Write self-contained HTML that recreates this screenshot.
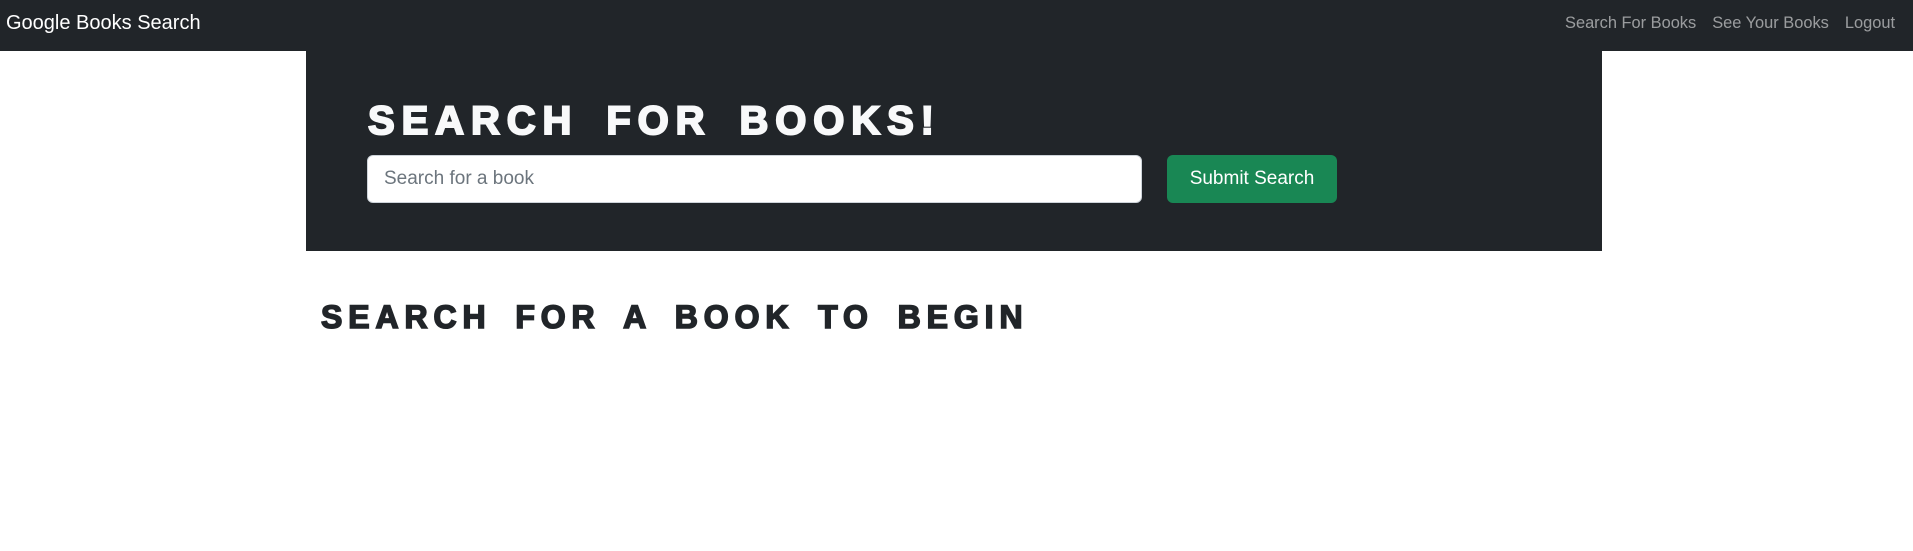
<!DOCTYPE html>
<html><head><meta charset="utf-8"><style>
*{box-sizing:border-box;margin:0;padding:0}
body{width:1913px;height:551px;background:#fff;font-family:"Liberation Sans",sans-serif;position:relative;overflow:hidden}
.nav{position:absolute;left:0;top:0;width:1913px;height:51px;background:#212529}
.brand{position:absolute;left:6px;top:12px;color:#fff;font-size:20px}
.links{position:absolute;right:18px;top:14px;color:rgba(255,255,255,.55);font-size:16.4px}
.links span{margin-left:16px}
.panel{position:absolute;left:306px;top:51px;width:1296px;height:200px;background:#212529}
h1,h2{position:absolute;font-weight:900;white-space:nowrap}
h1{left:368px;top:99px;color:#f8f9fa;font-size:40px;letter-spacing:6.9px;word-spacing:10px;-webkit-text-stroke:2px #f8f9fa}
h2{left:321px;top:299px;color:#212529;font-size:32px;letter-spacing:5.9px;word-spacing:9px;-webkit-text-stroke:1.6px #212529}
.input{position:absolute;left:367px;top:155px;width:775px;height:48px;background:#fff;border:1px solid #ced4da;border-radius:6px;color:#6c757d;font-size:19px;padding:12px 16px}
.btn{position:absolute;left:1167px;top:155px;width:170px;height:48px;background:#198754;border-radius:6px;color:#fff;font-size:19px;text-align:center;line-height:48px}
</style></head><body>
<div class="nav"><div class="brand">Google Books Search</div><div class="links"><span>Search For Books</span><span>See Your Books</span><span>Logout</span></div></div>
<div class="panel"></div>
<h1>SEARCH FOR BOOKS!</h1>
<div class="input">Search for a book</div>
<div class="btn">Submit Search</div>
<h2>SEARCH FOR A BOOK TO BEGIN</h2>
</body></html>
